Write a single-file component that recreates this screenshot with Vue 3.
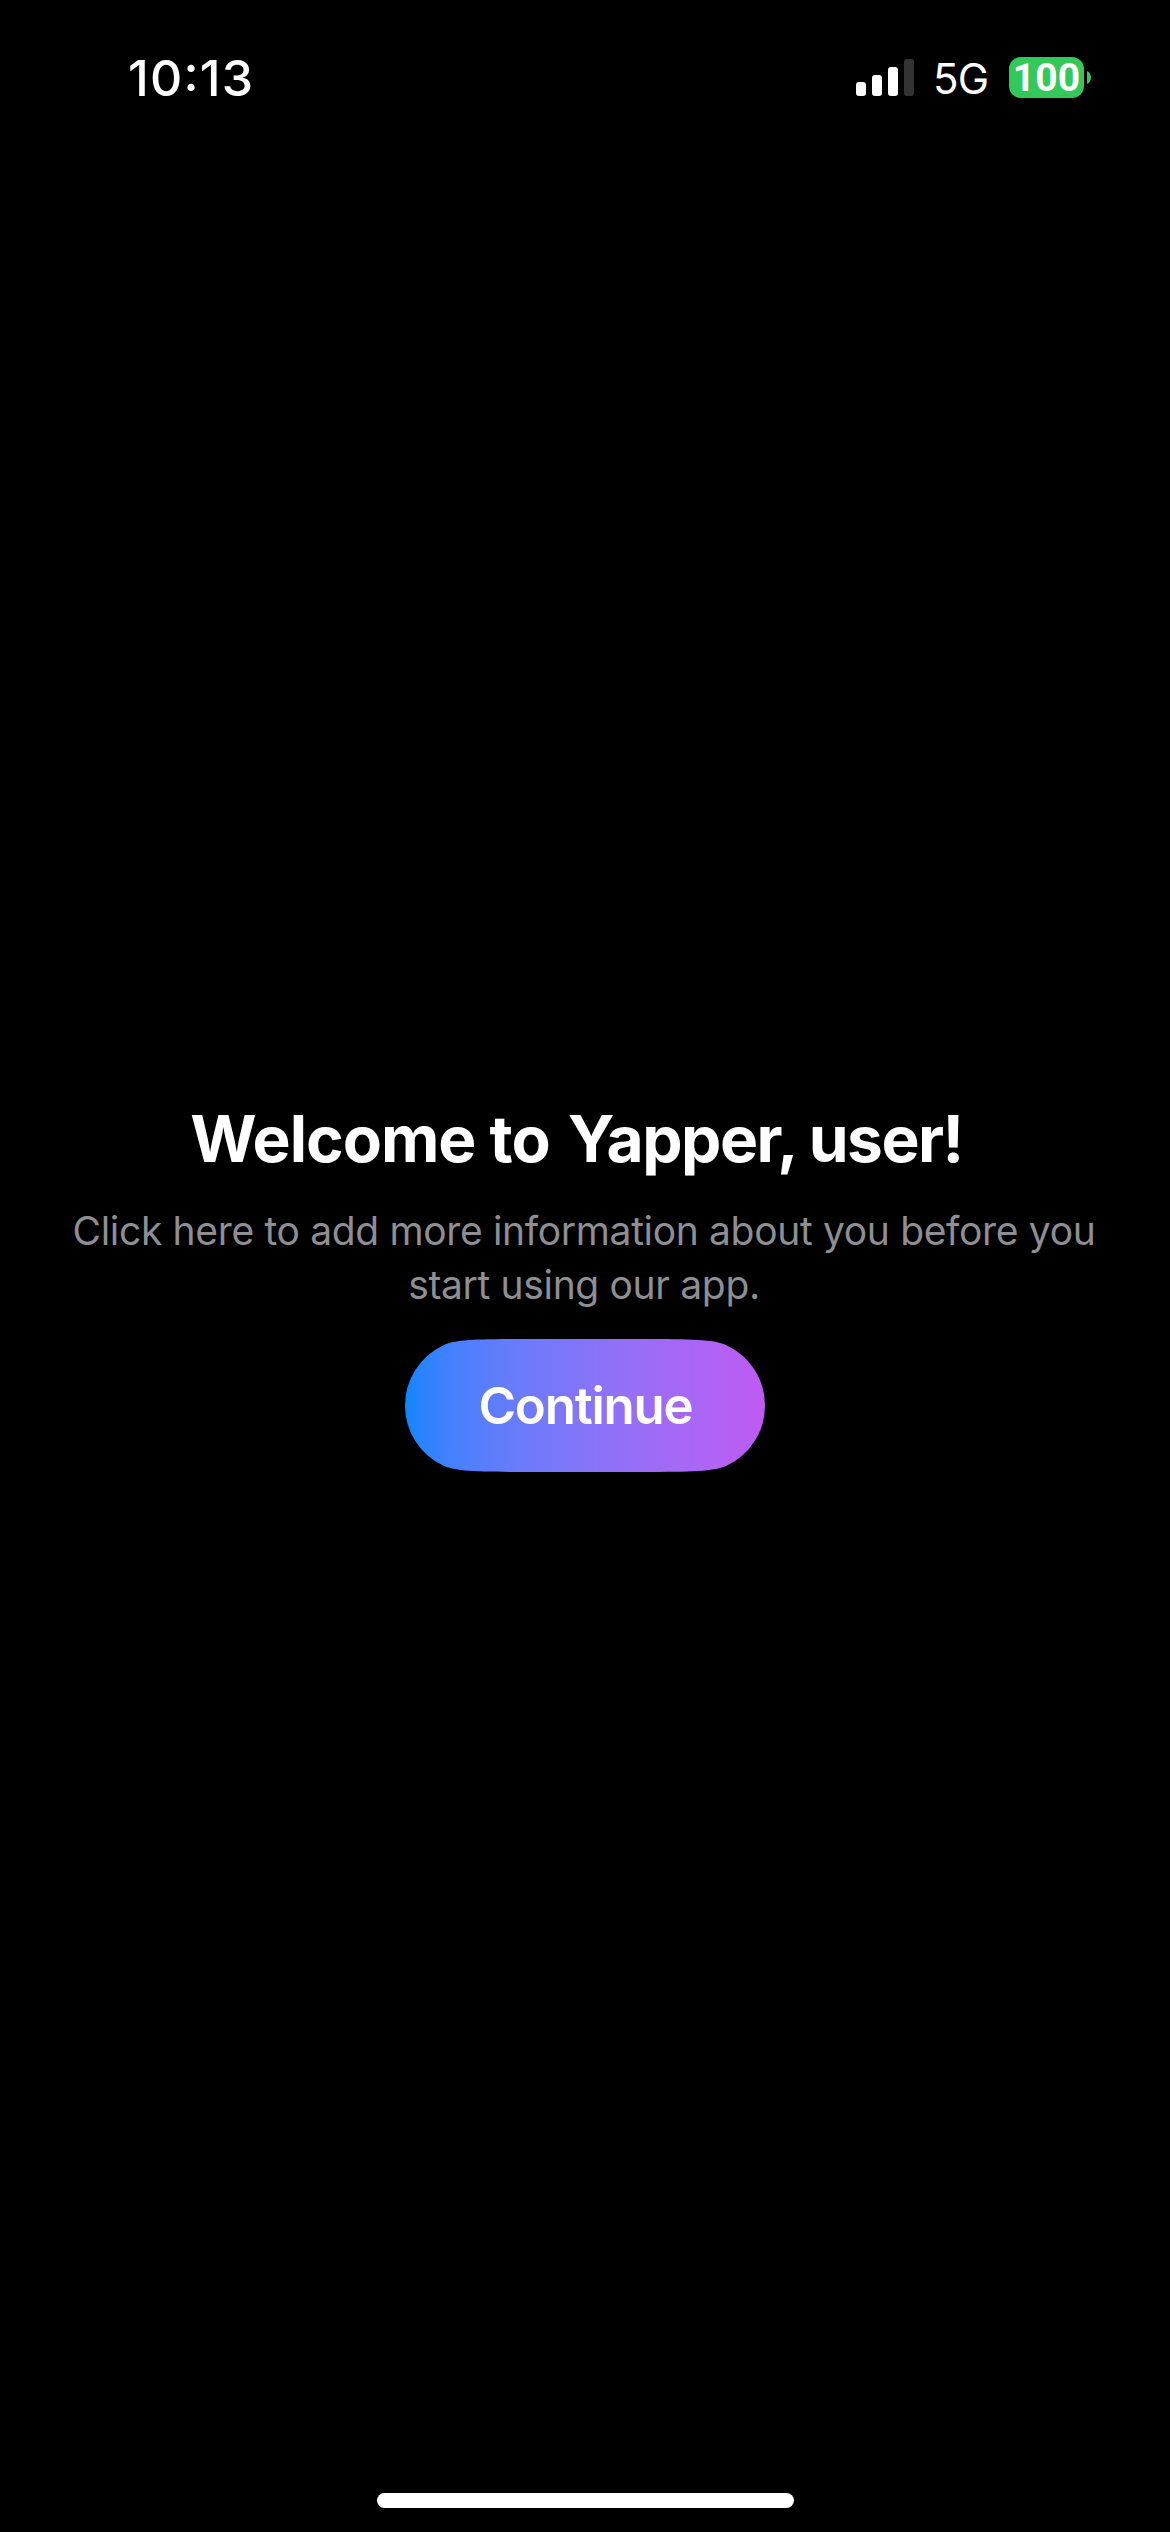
<script setup>
const bars = [14, 21, 29, 37]
</script>

<template>
  <div class="screen">
    <header class="status">
      <time class="clock">10:13</time>
      <div class="indicators">
        <div class="signal">
          <span
            v-for="(h, i) in bars"
            :key="h"
            class="bar"
            :class="{ dim: i === 3 }"
            :style="{ height: h + 'px' }"
          />
        </div>
        <span class="network">5G</span>
        <span class="battery"><span class="level">100</span></span>
        <svg class="nub" viewBox="0 0 4 13" width="4" height="13">
          <path d="M0 0C2.5 1 4 3.6 4 6.5S2.5 12 0 13Z" fill="#34c759" />
        </svg>
      </div>
    </header>

    <main class="content">
      <h1 class="title">Welcome to <span class="name">Yapper, user!</span></h1>
      <p class="subtitle">
        <span class="line">Click here to add more information about you before you</span>
        <span class="line">start using our app.</span>
      </p>
      <button class="continue" type="button"><span class="label">Continue</span></button>
    </main>

    <div class="home-indicator" />
  </div>
</template>

<style>
body {
  margin: 0;
  background: #000;
}
</style>

<style scoped>
.screen {
  display: flex;
  flex-direction: column;
  align-items: center;
  box-sizing: border-box;
  width: 1170px;
  height: 2532px;
  padding-bottom: 24px;
  background: #000;
  color: #fff;
  font-family: Inter, "Liberation Sans", sans-serif;
  overflow: hidden;
}
.status {
  display: flex;
  justify-content: space-between;
  box-sizing: border-box;
  width: 100%;
  height: 156px;
  padding: 48px 79px 0 128px;
}
.clock {
  font-size: 50px;
  font-weight: 500;
  line-height: 60px;
  letter-spacing: 1.2px;
  font-feature-settings: "case";
}
.indicators {
  display: flex;
  align-items: center;
  height: 59px;
}
.signal {
  display: flex;
  align-items: flex-end;
  gap: 6px;
  height: 37px;
  margin-right: 19px;
}
.bar {
  width: 10px;
  border-radius: 3px;
  background: #fff;
}
.dim {
  background: #333;
}
.network {
  width: 56px;
  margin-right: 20px;
  padding-top: 2px;
  font-size: 42px;
  line-height: 50px;
  letter-spacing: -0.8px;
  white-space: nowrap;
}
.battery {
  display: flex;
  justify-content: center;
  width: 75px;
  height: 41px;
  border-radius: 12px;
  background: #34c759;
}
.level {
  font-family: Roboto, Inter, sans-serif;
  font-size: 39px;
  font-weight: 700;
  line-height: 43px;
  letter-spacing: 0.2px;
}
.nub {
  margin-left: 3px;
}
.content {
  display: flex;
  flex: 1;
  flex-direction: column;
  align-items: center;
  width: 100%;
  padding-top: 944px;
}
.title {
  margin: 0 0 26px;
  padding-right: 17px;
  font-size: 64px;
  font-weight: 700;
  line-height: 78px;
  letter-spacing: -1px;
  white-space: nowrap;
}
.name {
  margin-left: 4px;
  letter-spacing: -1.5px;
}
.subtitle {
  display: flex;
  flex-direction: column;
  align-items: center;
  margin: 0 0 27px;
  padding-right: 2px;
  color: #8e8e93;
  font-size: 39px;
  line-height: 54px;
  letter-spacing: -0.34px;
  white-space: nowrap;
}
.continue {
  width: 360px;
  height: 133px;
  padding: 0 0 0 1px;
  border: 0;
  background: linear-gradient(90deg in oklab, #0a84ff, #bf5af2);
  clip-path: path("M0 66.5A66.5 66.5 0 0 1 38 6.4C49 1.2 66 0 115 0H245C294 0 311 1.2 322 6.4A66.5 66.5 0 0 1 322 126.6C311 131.8 294 133 245 133H115C66 133 49 131.8 38 126.6A66.5 66.5 0 0 1 0 66.5Z");
  color: #fff;
  font: 600 51px/133px Inter, "Liberation Sans", sans-serif;
  letter-spacing: -1.2px;
}
.home-indicator {
  width: 417px;
  height: 15px;
  border-radius: 8px;
  background: #fff;
}
</style>
